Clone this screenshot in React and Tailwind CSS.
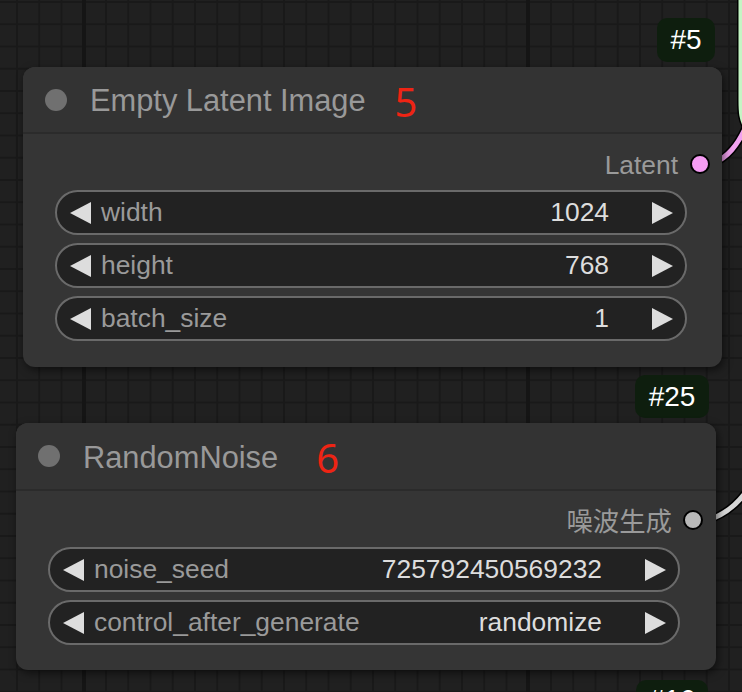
import React from "react";

function Tri({ dir }) {
  return (
    <svg width="22" height="22" viewBox="0 0 22 22" className="shrink-0">
      {dir === "left" ? (
        <polygon points="21,0 21,22 0,11" fill="#dddddd" />
      ) : (
        <polygon points="1,0 1,22 22,11" fill="#dddddd" />
      )}
    </svg>
  );
}

function Widget({ label, value }) {
  return (
    <div className="flex items-center h-[45px] rounded-full border-2 border-[#6a6a6a] bg-[#222222] pl-[13px] pr-[12px]">
      <Tri dir="left" />
      <span className="ml-[9px] text-[26.4px] leading-none text-[#9a9a9a]">{label}</span>
      <span className="flex-1" />
      <span className="text-[26.4px] leading-none text-[#dddddd]">{value}</span>
      <span className="ml-[42px] flex">
        <Tri dir="right" />
      </span>
    </div>
  );
}

function Badge({ className, text }) {
  return (
    <div
      className={
        "absolute flex justify-center rounded-[10px] bg-[#0e1e0e] text-white text-[28px] leading-none " +
        className
      }
    >
      {text}
    </div>
  );
}

export default function App() {
  return (
    <div className="relative w-[742px] h-[692px] overflow-hidden bg-[#202020] font-['Liberation_Sans',Arial,sans-serif]">
      {/* canvas grid */}
      <div className="absolute inset-0 bg-[linear-gradient(90deg,#151515_4px,transparent_4px),linear-gradient(90deg,#191919_2px,transparent_2px),linear-gradient(180deg,#191919_2px,transparent_2px)] [background-size:444px_100%,22.25px_22.25px,22.25px_22.25px] [background-position:82px_0,16px_0,0_1px]" />

      {/* links */}
      <svg className="absolute inset-0" width="742" height="692" viewBox="0 0 742 692">
        <path d="M 740.5 -5 L 740.5 100 C 740.5 112 741 120 746 128" stroke="#000" strokeWidth="7" fill="none" />
        <path d="M 740.5 -5 L 740.5 100 C 740.5 112 741 120 746 128" stroke="#c4f5c4" strokeWidth="4" fill="none" />
        <path d="M 712 164 C 727 158 738 146 748 122" stroke="#000" strokeWidth="8" fill="none" />
        <path d="M 712 164 C 727 158 738 146 748 122" stroke="#f2a2f0" strokeWidth="5" fill="none" />
        <path d="M 708 520 C 724 515 737 505 748 489" stroke="#000" strokeWidth="8" fill="none" />
        <path d="M 708 520 C 724 515 737 505 748 489" stroke="#d6d6d6" strokeWidth="5" fill="none" />
      </svg>

      {/* Node: Empty Latent Image */}
      <Badge className="left-[657px] top-[18px] w-[58px] h-[44px] items-center" text="#5" />
      <div className="absolute left-[23px] top-[67px] w-[699px] rounded-[12px] bg-[#353535] shadow-[2px_3px_8px_rgba(0,0,0,0.55)]">
        <div className="flex items-center h-[67px] rounded-t-[12px] bg-[#333333] border-b-2 border-[#2b2b2b] pl-[22px]">
          <div className="w-[22px] h-[22px] rounded-full bg-[#707070]" />
          <span className="ml-[23px] translate-y-[2px] text-[30.8px] leading-none text-[#999999]">Empty Latent Image</span>
          <span className="ml-[29px] translate-y-[2px] text-[40px] leading-none text-[#ee2414] font-['Noto_Sans',sans-serif]">5</span>
        </div>
        <div className="pt-[8px] pb-[26px] pl-[32px] pr-[35px]">
          <div className="flex items-center justify-end h-[44px] -mr-[23px]">
            <span className="translate-y-[1px] text-[26.4px] leading-none text-[#9a9a9a]">Latent</span>
            <div className="ml-[12px] w-[20px] h-[20px] rounded-full border-2 border-black bg-[#f59cf3]" />
          </div>
          <div className="mt-[4px] flex flex-col gap-[8px]">
            <Widget label="width" value="1024" />
            <Widget label="height" value="768" />
            <Widget label="batch_size" value="1" />
          </div>
        </div>
      </div>

      {/* Node: RandomNoise */}
      <Badge className="left-[635px] top-[375px] w-[74px] h-[43px] items-center" text="#25" />
      <div className="absolute left-[16px] top-[423px] w-[700px] rounded-[12px] bg-[#353535] shadow-[2px_3px_8px_rgba(0,0,0,0.55)]">
        <div className="flex items-center h-[68px] rounded-t-[12px] bg-[#333333] border-b-2 border-[#2b2b2b] pl-[22px]">
          <div className="w-[22px] h-[22px] rounded-full bg-[#707070]" />
          <span className="ml-[23px] translate-y-[2px] text-[30.8px] leading-none text-[#999999]">RandomNoise</span>
          <span className="ml-[38px] translate-y-[2px] text-[40px] leading-none text-[#ee2414] font-['Noto_Sans',sans-serif]">6</span>
        </div>
        <div className="pt-[7px] pb-[25px] pl-[32px] pr-[36px]">
          <div className="flex items-center justify-end h-[44px] -mr-[23px]">
            <span className="text-[26.4px] leading-none text-[#9a9a9a] font-['Noto_Sans_CJK_SC',sans-serif]">噪波生成</span>
            <div className="ml-[11px] w-[20px] h-[20px] rounded-full border-2 border-black bg-[#b8b8b8]" />
          </div>
          <div className="mt-[5px] flex flex-col gap-[8px]">
            <Widget label="noise_seed" value="725792450569232" />
            <Widget label="control_after_generate" value="randomize" />
          </div>
        </div>
      </div>

      <Badge className="left-[636px] top-[680px] w-[72px] h-[44px] items-start pt-[6px]" text="#16" />
    </div>
  );
}
